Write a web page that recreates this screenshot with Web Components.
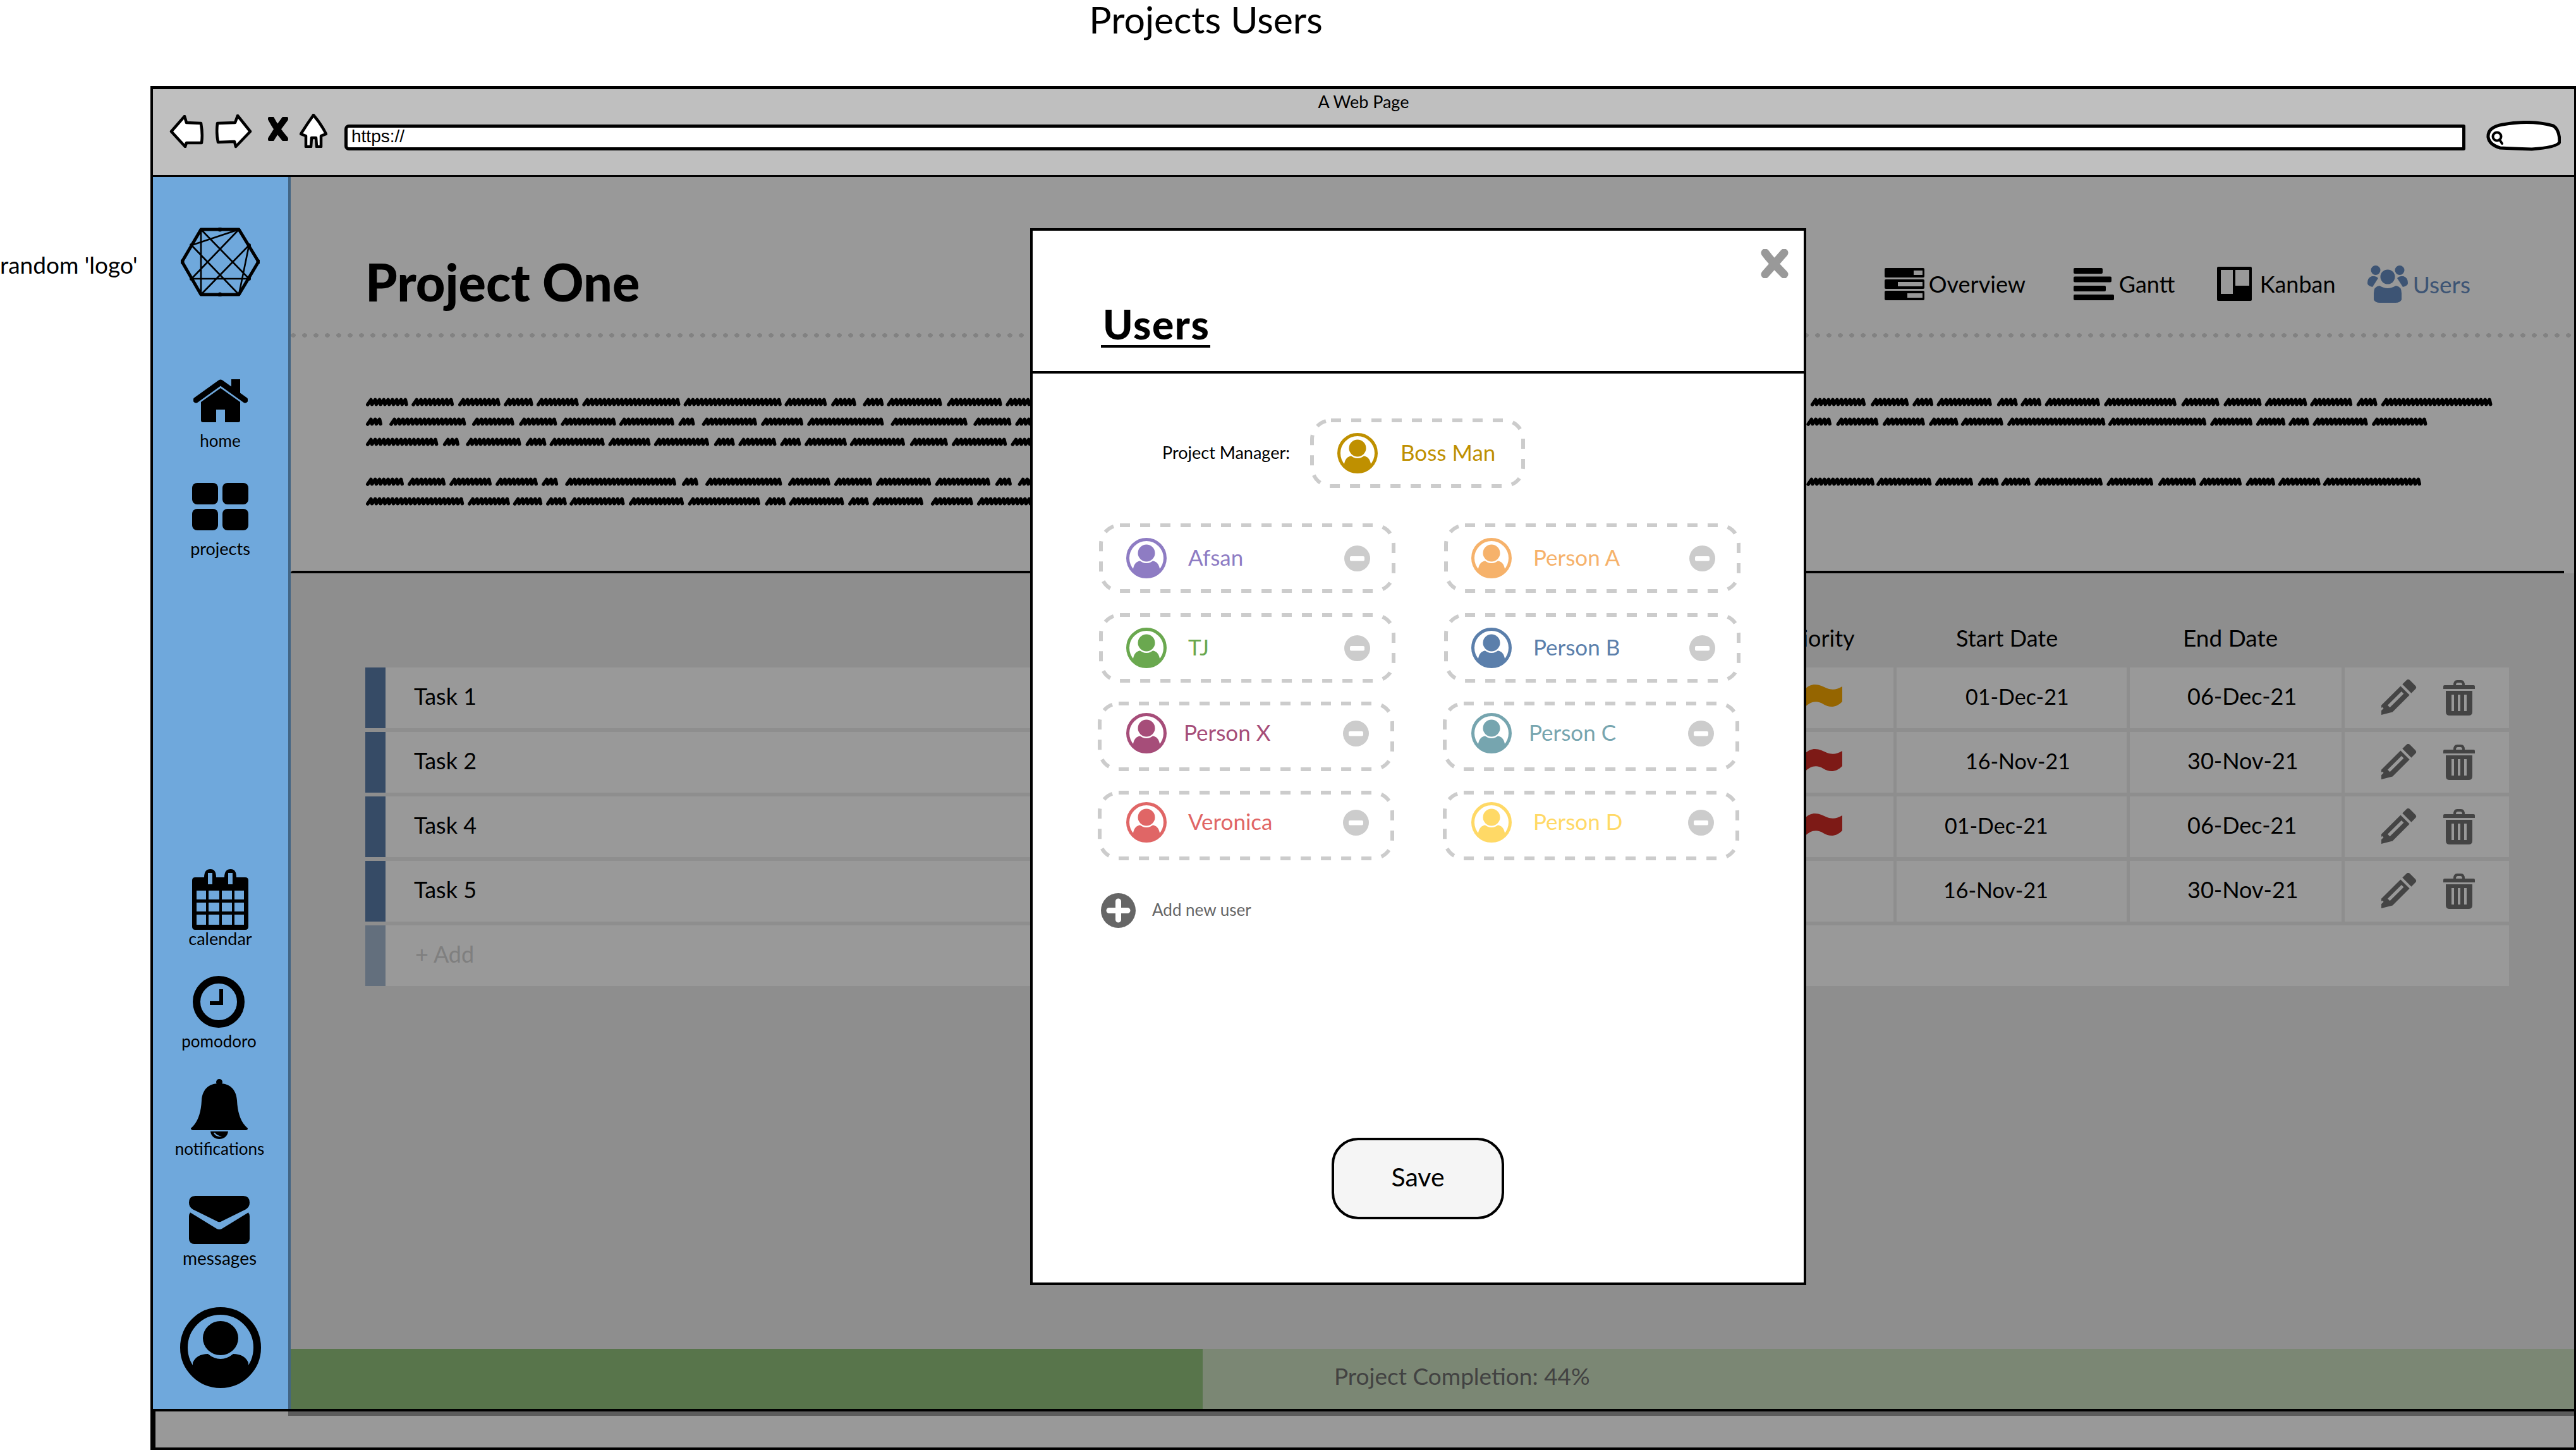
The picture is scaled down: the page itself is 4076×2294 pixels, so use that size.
<!DOCTYPE html>
<html lang="en"><head><meta charset="utf-8"><title>Projects Users</title>
<style>
html,body{margin:0;padding:0;background:#fff;}
body{width:4076px;height:2294px;overflow:hidden;font-family:"Lato","Liberation Sans",sans-serif;color:#000;}
</style></head><body>
<wf-page></wf-page>
<script>
const S=(w,h,vb,inner)=>`<svg xmlns="http://www.w3.org/2000/svg" width="${w}" height="${h}" viewBox="${vb||`0 0 ${w} ${h}`}" style="display:block;flex:none">${inner}</svg>`;
const BLUE='#6fa8dc';
const ICONS={
logo:S(125,109,'',`<g fill="none" stroke="#000"><path d="M2 54 32 3H92L123 54 92 106H32Z" stroke-width="5" stroke-linejoin="round"/><path stroke-width="2.6" d="M32 3V106M92 3 17 28M32 3 108 81M92 3 17 81M17 28 92 106M108 28 32 106M108 28 92 106M17 81H108"/></g><g fill="#000"><circle cx="62" cy="3" r="3.5"/><circle cx="62" cy="106" r="3.5"/><circle cx="17" cy="28" r="3"/><circle cx="108" cy="28" r="3"/><circle cx="17" cy="81" r="3"/><circle cx="108" cy="81" r="3"/><circle cx="2" cy="54" r="3.5"/><circle cx="123" cy="54" r="3.5"/></g>`),
home:S(86,69,'',`<path d="M4 33 43 5 82 33" fill="none" stroke="#000" stroke-width="9" stroke-linecap="round" stroke-linejoin="round"/><path d="M60 0H74V24L60 14Z"/><path d="M12 36 43 14 74 36V65Q74 68 71 68H50V48H36V68H15Q12 68 12 65Z"/>`),
projects:S(89,75,'',`<rect width="41" height="34" rx="8"/><rect x="48" width="41" height="34" rx="8"/><rect y="41" width="41" height="34" rx="8"/><rect x="48" y="41" width="41" height="34" rx="8"/>`),
calendar:S(89,96,'',`<path fill-rule="evenodd" d="M5 13H19Q19 0 29 0 38 0 38 13H51Q51 0 61 0 70 0 70 13H84Q89 13 89 18V91Q89 96 84 96H5Q0 96 0 91V18Q0 13 5 13ZM25 6V24H32V6ZM57 6V24H64V6ZM7 34V48H22V34ZM26 34V48H43V34ZM47 34V48H63V34ZM67 34V48H82V34ZM7 53V67H22V53ZM26 53V67H43V53ZM47 53V67H63V53ZM67 53V67H82V53ZM7 72V88H22V72ZM26 72V88H43V72ZM47 72V88H63V72ZM67 72V88H82V72Z"/>`),
clock:S(82,82,'',`<circle cx="41" cy="41" r="35" fill="none" stroke="#000" stroke-width="12"/><path d="M42 21H48V46H27V40H42Z"/>`),
bell:S(90,95,'',`<circle cx="45" cy="5" r="5"/><path d="M45 7C27 7 18 18 17 34 16 55 10 70 0 78 0 81 2 81 5 81H85C88 81 90 81 90 78 80 70 74 55 73 34 72 18 63 7 45 7Z"/><path fill-rule="evenodd" d="M31 83H59C58 91 52 95 45 95 38 95 32 91 31 83ZM36 85C38 90 43 92 49 91 44 90 40 88 38 85Z"/>`),
mail:S(96,76,'',`<rect y="24" width="96" height="52" rx="8"/><path d="M0 25 44 52Q48 54 52 52L96 25V0H0Z" fill="${BLUE}"/><path d="M10 0H86Q96 0 96 9 96 15 90 18L52 34Q48 36 44 34L6 18Q0 15 0 9 0 0 10 0Z" transform="scale(1,1.18)"/>`),
users:S(64,59,'',`<g fill="#668dc2"><ellipse cx="13" cy="7.5" rx="7.5" ry="7.5"/><ellipse cx="51" cy="7.5" rx="7.5" ry="7.5"/><circle cx="32" cy="18" r="11.5"/><path d="M7 17Q0 19 0 28 0 32 8 34L17 20Q14 17 11 17ZM57 17Q64 19 64 28 64 32 56 34L47 20Q50 17 53 17Z"/><path d="M19 32Q10 33 10 44V54Q12 59 20 59H44Q52 59 54 54V44Q54 33 45 32 38 36 32 36 26 36 19 32Z"/></g>`),
overview:S(63,51,'',`<rect width="63" height="15" rx="2"/><rect y="18" width="63" height="15" rx="2"/><rect y="36" width="63" height="15" rx="2"/><rect x="46" y="4" width="14" height="7" fill="#fff"/><rect x="21" y="22" width="39" height="7" fill="#fff"/><rect x="36" y="40" width="24" height="7" fill="#fff"/>`),
gantt:S(64,51,'',`<rect width="46" height="9" rx="2"/><rect y="13.5" width="60" height="9" rx="2"/><rect y="28" width="51" height="9" rx="2"/><rect y="42" width="64" height="9" rx="2"/>`),
kanban:S(55,54,'',`<rect width="55" height="54" rx="2"/><rect x="6" y="5" width="19" height="38" fill="#fff"/><rect x="29" y="5" width="22" height="25" fill="#fff"/>`),
flagO:S(60,37,'',`<path fill="#f9a800" d="M0 8C14 -6 26 2 36 6 44 9 52 8 60 3V27C50 37 40 37 30 31 20 25 10 26 0 37Z"/>`),
flagR:S(60,37,'',`<path fill="#d12c26" d="M0 8C14 -6 26 2 36 6 44 9 52 8 60 3V27C50 37 40 37 30 31 20 25 10 26 0 37Z"/>`),
pencil:S(56,58,'',`<g transform="translate(46,9) rotate(45)" fill="#727272"><path d="M-10 -1Q-10 -5 -6 -5H6Q10 -5 10 -1V8H-10Z"/><path fill-rule="evenodd" d="M-10 12H10V50L0 67H-10ZM-3 17V48H2V17ZM-7 56V62H-4V56Z"/></g>`),
trash:S(50,56,'',`<path fill="#727272" fill-rule="evenodd" d="M16 8Q16 0 22 0H28Q34 0 34 8H48Q50 8 50 10V14H0V10Q0 8 2 8ZM20 8H30Q30 4 27 4H23Q20 4 20 8ZM4 17H46V50Q46 56 40 56H10Q4 56 4 50ZM13 23V49H17V23ZM23 23V49H27V23ZM33 23V49H37V23Z"/>`),
x:S(46,46,'',`<path d="M8 6Q20 22 38 40M38 6Q24 22 8 40" fill="none" stroke="#999" stroke-width="13" stroke-linecap="round"/>`),
minus:S(41,41,'',`<circle cx="20.5" cy="20.5" r="20.5" fill="#ccc"/><rect x="9" y="17" width="23" height="7.5" rx="2" fill="#fff"/>`),
plus:S(55,55,'',`<circle cx="27.5" cy="27.5" r="27.5" fill="#666"/><path d="M27.5 13V42M13 27.5H42" stroke="#fff" stroke-width="9" stroke-linecap="round"/>`),
back:S(55,52,'',`<path d="M3 26 24 2 27 12 50 13Q53 30 51 44L27 44 25 50Z" fill="#fff" stroke="#000" stroke-width="4.5" stroke-linejoin="round"/>`),
fwd:S(58,54,'',`<path d="M55 27 35 2 31 13 3 14Q1 30 4 44L30 43 32 51Z" fill="#fff" stroke="#000" stroke-width="4.5" stroke-linejoin="round"/>`),
close:S(32,38,'',`<path d="M5 3Q14 20 27 35M27 3Q15 18 5 35" fill="none" stroke="#000" stroke-width="10" stroke-linecap="round"/>`),
bhome:S(44,54,'',`<path d="M22 2Q34 16 42 32L34 35 34 52 27 52 26 38 19 38 18 52 10 52 10 35 2 32Q12 16 22 2Z" fill="#fff" stroke="#000" stroke-width="4.5" stroke-linejoin="round"/>`),
search:S(118,48,'',`<path d="M3 26Q2 10 26 6 70 -2 106 8 116 14 116 34 112 42 72 45 40 44 22 43 5 38 3 26Z" fill="#fff" stroke="#000" stroke-width="5"/><circle cx="17" cy="25" r="6.5" fill="none" stroke="#000" stroke-width="4"/><path d="M21 30 25 36" stroke="#000" stroke-width="4" stroke-linecap="round"/>`)
};
function avatar(c,size,bg){
  const id='a'+Math.random().toString(36).slice(2);
  return `<svg width="${size}" height="${size}" viewBox="0 0 64 64" style="display:block;flex:none"><defs><clipPath id="${id}"><circle cx="32" cy="32" r="30"/></clipPath></defs><circle cx="32" cy="32" r="29.5" fill="${bg}" stroke="${c}" stroke-width="5"/><g clip-path="url(#${id})"><path d="M10 64C10 46 12 38 23 36H41C52 38 54 46 54 64Z" fill="${c}"/><ellipse cx="32" cy="24" rx="16" ry="16" fill="${bg}"/><ellipse cx="32" cy="24" rx="13.5" ry="13.5" fill="${c}"/></g></svg>`;
}
const def=(n,f)=>customElements.define(n,class extends HTMLElement{connectedCallback(){if(!this.shadowRoot){this.attachShadow({mode:'open'}).innerHTML=f(this);}}});

def('wf-nav-item',el=>{
  const k=el.getAttribute('icon'),g=el.getAttribute('gap')||0,m=el.getAttribute('top')||0,o=el.getAttribute('off')||0,fs=el.getAttribute('fs')||26;
  return `<style>:host{display:flex;flex-direction:column;align-items:center;margin-top:${m}px;transform:translateX(${o}px)}
  span{font-size:${fs}px;line-height:28px;margin-top:${g}px;white-space:nowrap}</style>${ICONS[k]}<span><slot></slot></span>`;
});
def('wf-sidebar',()=>`<style>:host{display:flex;flex-direction:column;width:218px;flex:none;background:${BLUE};align-items:center;box-sizing:border-box;padding-right:5px;padding-top:80px}
.logo{margin-bottom:131px}.sp{flex:1}.av{margin-bottom:33px;margin-top:64px}</style>
<div class="logo">${ICONS.logo}</div>
<wf-nav-item icon="home" gap="14">home</wf-nav-item>
<wf-nav-item icon="projects" gap="15" top="53" fs="27">projects</wf-nav-item>
<div class="sp"></div>
<wf-nav-item icon="calendar" gap="0" fs="27">calendar</wf-nav-item>
<wf-nav-item icon="clock" gap="7" top="45" off="-2">pomodoro</wf-nav-item>
<wf-nav-item icon="bell" gap="1" top="46" off="-1">notifications</wf-nav-item>
<wf-nav-item icon="mail" gap="8" top="61" off="-1" fs="28">messages</wf-nav-item>
<div class="av"><svg width="128" height="128" viewBox="0 0 128 128" style="display:block"><defs><clipPath id="c"><circle cx="64" cy="64" r="60"/></clipPath></defs><circle cx="64" cy="64" r="58" fill="none" stroke="#000" stroke-width="12"/><g clip-path="url(#c)"><path d="M20 128V88Q26 74 44 74 54 82 64 82 74 82 84 74 102 74 108 88V128Z"/></g><ellipse cx="64" cy="49" rx="28" ry="27"/></svg></div>`);

def('wf-toolbar',()=>`<style>:host{display:block;height:136px;background:#bfbfbf;border-bottom:3px solid #000;flex:none}
.t{font-size:27px;line-height:36px;text-align:center;padding-top:2px;height:35px}
.r{display:flex;align-items:flex-start;height:62px}
.url{box-sizing:border-box;width:3356px;height:41px;background:#fff;border:5px solid #000;border-radius:7px 3px 3px 7px;margin:19px 0 0 27px;font:28px/27px "Liberation Sans",sans-serif;padding-left:6px}
</style><div class="t">A Web Page</div><div class="r">
<div style="margin:4px 0 0 26px">${ICONS.back}</div><div style="margin:3px 0 0 18px">${ICONS.fwd}</div><div style="margin:7px 0 0 25px">${ICONS.close}</div><div style="margin:2px 0 0 18px">${ICONS.bhome}</div>
<div class="url">https://</div><div style="margin:13px 0 0 33px">${ICONS.search}</div></div>`);

def('wf-tab',el=>{const c=el.getAttribute('color')||'#000',g=el.getAttribute('gap')||7;
 return `<style>:host{display:flex;align-items:center;font-size:36px;color:${c};gap:${g}px;white-space:nowrap}</style>${ICONS[el.getAttribute('icon')]}<slot></slot>`;});
def('wf-project-header',()=>`<style>:host{display:flex;height:247px;box-sizing:border-box;padding:0 0 0 118px;align-items:flex-start}
h1{margin:120px 0 0;font-size:81px;line-height:92px;font-weight:900;letter-spacing:0}
.tabs{margin-left:auto;margin-right:164px;margin-top:138px;display:grid;grid-template-columns:299px 227px 238px auto;align-items:center;height:62px}
</style><h1>Project One</h1><div class="tabs"><wf-tab icon="overview">Overview</wf-tab><wf-tab icon="gantt" gap="8">Gantt</wf-tab><wf-tab icon="kanban" gap="13">Kanban</wf-tab><wf-tab icon="users" color="#668dc2" gap="8" style="font-size:37px">Users</wf-tab></div>`);

def('wf-scribble',()=>{
 const L=[[[28,118],[133,225],[240,330],[345,405],[420,510],[525,742],[758,975],[990,1082],[1097,1155],[1170,1210],[1225,1348],[1363,1484],[1498,1560]],
 [[28,65],[82,258],[272,365],[380,462],[476,596],[610,730],[746,785],[800,920],[936,1026],[1042,1218],[1234,1408],[1424,1505],[1520,1560]],
 [[28,190],[205,242],[258,380],[395,435],[450,570],[585,675],[690,812],[828,868],[884,965],[980,1020],[1036,1125],[1140,1262],[1278,1358],[1374,1495],[1510,1560]],
 [[28,108],[124,206],[220,310],[326,416],[432,470],[486,740],[754,792],[808,982],[998,1088],[1104,1186],[1200,1320],[1336,1458],[1474,1510],[1526,1560]],
 [[28,246],[262,352],[366,426],[442,482],[496,616],[632,752],[768,930],[945,985],[1000,1120],[1136,1176],[1192,1310],[1326,1416],[1432,1560]]];
 const R={0:[[80,187],[197,268],[278,312],[325,432],[442,478],[488,525],[535,640],[650,788],[800,870],[882,952],[962,1040],[1050,1130],[1140,1176],[1188,1400]],
 1:[[72,120],[130,210],[220,298],[310,360],[372,450],[462,648],[658,844],[856,935],[945,998],[1008,1045],[1055,1160],[1170,1272]],
 3:[[72,198],[208,312],[322,395],[405,440],[450,505],[515,645],[655,745],[755,825],[835,915],[925,978],[988,1065],[1075,1260]]};
 const Y=[12,43,75,138,169];
 const word=(a,b,y)=>{let x=a+2.5,d=`M${x.toFixed(1)} ${y+4}`;while(x<b-4){x+=5.2;d+=`L${x.toFixed(1)} ${y-3.5}`;x+=1.6;d+=`L${x.toFixed(1)} ${y+3.6}`;}return d;};
 let d='';
 L.forEach((ws,i)=>ws.forEach(w=>d+=word(w[0]/1.452,w[1]/1.452,Y[i])));
 Object.keys(R).forEach(i=>R[i].forEach(w=>d+=word(2240+w[0]/1.227,2240+w[1]/1.227,Y[i])));
 return `<style>:host{display:block;margin:90px 0 0 100px;height:180px}</style><svg width="3500" height="180" style="display:block"><path d="${d}" fill="none" stroke="#000" stroke-width="5.6" stroke-linecap="round" stroke-linejoin="round"/></svg>`;
});

const COLS='2122px 291px 364px 335px 260px';
def('wf-task-head',()=>`<style>:host{display:grid;grid-template-columns:${COLS};column-gap:5px;height:149px;align-items:end;font-size:36px;box-sizing:border-box;padding-bottom:25px;line-height:44px}
</style><div></div><div style="padding-left:113px">Priority</div><div style="padding-left:94px">Start Date</div><div style="padding-left:84px;font-size:37px">End Date</div><div></div>`);
def('wf-task-row',el=>{const a=n=>el.getAttribute(n)||'';
 const f=a('flag')?ICONS[a('flag')]:'';
 return `<style>:host{display:grid;grid-template-columns:${COLS};column-gap:5px;height:96px;margin-bottom:6px;font-size:36px}
 .c{background:#fff;display:flex;align-items:center;padding-bottom:6px;box-sizing:border-box}
 .n{border-left:32px solid #5b7daa;padding-left:45px}
 .act{padding-bottom:0;padding-left:58px;gap:42px}</style>
 <div class="c n"><slot></slot></div><div class="c" style="padding-left:150px">${f}</div><div class="c" style="padding-left:${a('pad')}px;font-size:34px">${a('start')}</div><div class="c" style="padding-left:91px">${a('end')}</div><div class="c act">${ICONS.pencil}${ICONS.trash}</div>`;});
def('wf-task-add',()=>`<style>:host{display:flex;align-items:center;height:96px;background:#fff;border-left:32px solid #a5b9d0;box-sizing:border-box;padding:0 0 6px 47px;font-size:36px;color:#d4d4d4}</style><slot></slot>`);
def('wf-progress',el=>`<style>:host{display:flex;height:95px;margin-top:auto;background:#cde1c1;flex:none;font-size:37px;color:#6f6f6f}
.f{width:1443px;background:#93c47d}.t{padding-left:208px;line-height:86px}</style><div class="f"></div><div class="t"><slot></slot></div>`);
def('wf-main',()=>`<style>:host{display:flex;flex-direction:column;flex:1;min-width:0;background:#ededed}
.top{background:#fff;height:623px}
.dots{height:7px;background:radial-gradient(ellipse 4px 3.4px at 4px 3.5px,#d9d9d9 92%,transparent 100%) 0 0/18px 7px repeat-x}
.line{height:4px;background:#000;margin-right:16px;border-radius:4px 0 0 0}
.tbl{margin:0 103px 0 118px}</style>
<div class="top"><wf-project-header></wf-project-header><div class="dots"></div><wf-scribble></wf-scribble></div>
<div style="background:#fff"><div class="line"></div></div>
<div class="tbl"><wf-task-head></wf-task-head>
<wf-task-row flag="flagO" pad="109" start="01-Dec-21" end="06-Dec-21">Task 1</wf-task-row>
<wf-task-row flag="flagR" pad="109" start="16-Nov-21" end="30-Nov-21">Task 2</wf-task-row>
<wf-task-row flag="flagR" pad="76" start="01-Dec-21" end="06-Dec-21">Task 4</wf-task-row>
<wf-task-row pad="74" start="16-Nov-21" end="30-Nov-21">Task 5</wf-task-row>
<wf-task-add>+ Add</wf-task-add></div>
<wf-progress>Project Completion: 44%</wf-progress>`);

def('wf-user-chip',el=>{const c=el.getAttribute('color'),w=+el.getAttribute('w')||463,g=el.getAttribute('gap')||34,m=el.hasAttribute('noremove')?'':ICONS.minus,
 low=el.hasAttribute('low'),mt=el.getAttribute('mt')||0;
 return `<style>:host{display:flex;position:relative;align-items:center;box-sizing:border-box;width:${w}px;height:104px;margin-top:${mt}px;margin-left:${low?-2:0}px;padding:0 37px ${low?10:0}px ${low?42:40}px;color:${c};font-size:35px}
 svg.b{position:absolute;left:-3px;top:-3px}.n{margin-left:${g}px;flex:1;white-space:nowrap;padding-bottom:5px}</style>
 <svg class="b" width="${w+6}" height="110" fill="none"><rect x="3" y="3" width="${w}" height="104" rx="30" stroke="#ccc" stroke-width="6" stroke-dasharray="16 16"/></svg>
 ${avatar(c,64,'#fff')}<span class="n"><slot></slot></span>${m}`;});
def('wf-modal',()=>`<style>:host{position:absolute;left:214px;top:139px;right:0;height:1960px;background:rgba(0,0,0,.4);display:block;overflow:hidden}
.box{position:relative;box-sizing:border-box;width:1228px;height:1672px;margin:81px 0 0 1174px;background:#fff;border:4px solid #000;display:flow-root}
.x{position:absolute;left:1151px;top:29px}
.h{border-bottom:4px solid #000;padding:118px 0 0 108px;height:104px}
.h b{display:inline-block;font-size:64px;line-height:60px;font-weight:900;letter-spacing:1.6px;padding:0 1px 3px 3px;border-bottom:4px solid #000}
.pm{display:flex;align-items:center;margin-top:74px;padding-left:205px}
.pm span{width:237px;font-size:27px;padding-bottom:3px}
.g{display:grid;grid-template-columns:463px 463px;grid-template-rows:repeat(4,104px);column-gap:83px;row-gap:37px;margin:62px 0 0 108px}
.add{display:flex;align-items:center;gap:26px;margin:55px 0 0 108px;font-size:26px;color:#666}
.add span{padding-bottom:3px}
.save{box-sizing:border-box;width:273px;height:129px;margin:332px 0 0 473px;background:#f5f5f5;border:4px solid #000;border-radius:42px;display:flex;align-items:center;justify-content:center;font-size:41px;padding-bottom:6px}
</style><div class="box"><div class="x">${ICONS.x}</div><div class="h"><b>Users</b></div>
<div class="pm"><span>Project Manager:</span><wf-user-chip color="#bf9000" w="334" gap="36" noremove>Boss Man</wf-user-chip></div>
<div class="g">
<wf-user-chip color="#8e7cc3">Afsan</wf-user-chip><wf-user-chip color="#f6b26b">Person A</wf-user-chip>
<wf-user-chip color="#6aa84f" mt="1">TJ</wf-user-chip><wf-user-chip color="#5b7fab" mt="1">Person B</wf-user-chip>
<wf-user-chip color="#a64d79" gap="27" low>Person X</wf-user-chip><wf-user-chip color="#76a5af" gap="27" low>Person C</wf-user-chip>
<wf-user-chip color="#e06666" low>Veronica</wf-user-chip><wf-user-chip color="#ffd966" low>Person D</wf-user-chip>
</div>
<div class="add">${ICONS.plus}<span>Add new user</span></div>
<div class="save">Save</div></div>`);
def('wf-window',()=>`<style>:host{display:flex;flex-direction:column;position:relative;box-sizing:border-box;width:3838px;height:2158px;border-style:solid;border-color:#000;border-width:5px 3px 4px 4px;flex:none}
.b{display:flex;flex:1;min-height:0}
.f{flex:none;height:61px;box-sizing:border-box;background:#999;border-top:4px solid #000;border-left:4px solid #000}</style>
<wf-toolbar></wf-toolbar><div class="b"><wf-sidebar></wf-sidebar><wf-main></wf-main></div><div class="f"></div><wf-modal></wf-modal>`);
def('wf-page',()=>`<style>:host{display:block;width:4076px;height:2294px;font-family:"Lato","Liberation Sans",sans-serif}
.t{width:3816px;text-align:center;font-size:59px;line-height:62px;height:136px}
.r{display:flex}.g{width:238px;flex:none;font-size:37px;line-height:44px;padding-top:261px;box-sizing:border-box;white-space:nowrap}</style>
<div class="t">Projects Users</div><div class="r"><div class="g">random 'logo'</div><wf-window></wf-window></div>`);
</script></body></html>
